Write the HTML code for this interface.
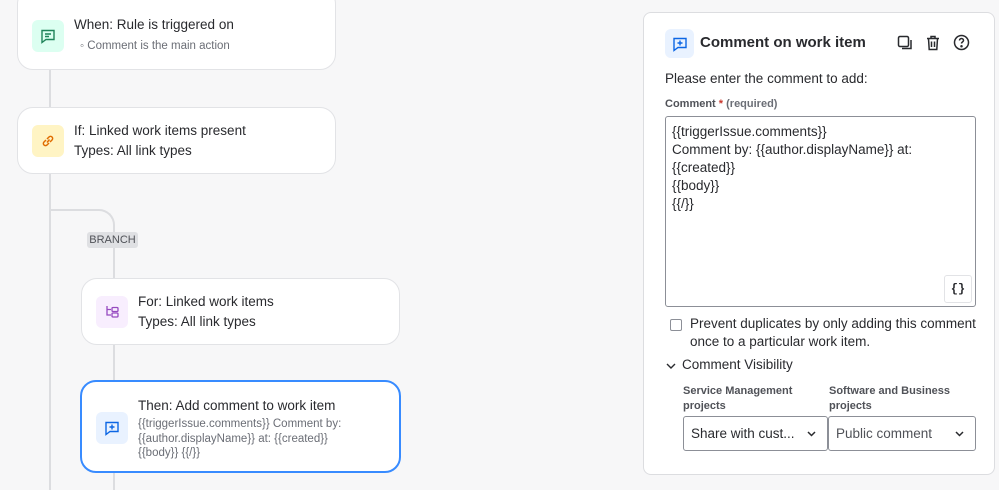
<!DOCTYPE html>
<html><head><style>
*{box-sizing:border-box;margin:0;padding:0}
body{width:999px;height:488px;overflow:hidden;background:#f7f7f8;font-family:"Liberation Sans",sans-serif;color:#292a2e;position:relative}
.card{position:absolute;background:#fff;border:1px solid #e2e3e6;border-radius:16px}
.ic{position:absolute;width:32px;height:32px;border-radius:6px;display:flex;align-items:center;justify-content:center}
.t{position:absolute;font-size:13.5px;line-height:20px}
.line{position:absolute;background:#dcdde0;width:2px}
.panel{position:absolute;left:643px;top:12px;width:352px;height:463px;background:#fff;border:1px solid #dcdde0;border-radius:8px}
.lbl{font-size:11px;font-weight:bold;color:#505258}
</style></head><body>
<div class="line" style="left:49px;top:60px;height:430px"></div>
<div style="position:absolute;left:49px;top:209px;width:66px;height:40px;border-top:2px solid #dcdde0;border-right:2px solid #dcdde0;border-top-right-radius:16px"></div>
<div class="line" style="left:113px;top:240px;height:250px"></div>
<div style="position:absolute;left:87px;top:232px;width:51px;height:16px;background:#dfe0e3;border-radius:3px;font-size:11px;color:#505258;text-align:center;line-height:16px">BRANCH</div>

<div class="card" style="left:17px;top:-12px;width:319px;height:82px">
<div class="ic" style="left:14px;top:31px;background:#dcfff1"><svg width="16" height="16" viewBox="0 0 16 16" fill="none" stroke="#1f845a" stroke-width="1.4"><path d="M2 2.5h12v9H6l-4 3z"/><path d="M5 6h6M5 8.5h4"/></svg></div>
<div class="t" style="left:56px;top:26px">When: Rule is triggered on</div>
<div class="t" style="left:62px;top:47px;font-size:11.5px;color:#6b6e76">◦ Comment is the main action</div>
</div>

<div class="card" style="left:17px;top:107px;width:319px;height:67px">
<div class="ic" style="left:14px;top:17px;background:#fff4c4"><svg width="16" height="16" viewBox="0 0 16 16" fill="none" stroke="#e06c00" stroke-width="1.5"><path d="M7 9.5l2.5-3M6 7L4 9a2 2 0 003 3l2-2M10 9l2-2a2 2 0 00-3-3L7 6"/></svg></div>
<div class="t" style="left:56px;top:13px">If: Linked work items present</div>
<div class="t" style="left:56px;top:33px">Types: All link types</div>
</div>

<div class="card" style="left:81px;top:278px;width:319px;height:67px">
<div class="ic" style="left:14px;top:17px;background:#f8eefe"><svg width="16" height="16" viewBox="0 0 16 16" fill="none" stroke="#964ac0" stroke-width="1.3"><path d="M3 2v9h4M3 5.5h4"/><rect x="8" y="3.5" width="6" height="4" rx="1"/><rect x="8" y="9" width="6" height="4" rx="1"/></svg></div>
<div class="t" style="left:56px;top:13px">For: Linked work items</div>
<div class="t" style="left:56px;top:33px">Types: All link types</div>
</div>

<div class="card" style="left:80px;top:380px;width:321px;height:93px;border:2px solid #388bff">
<div class="ic" style="left:14px;top:30px;background:#e9f2ff"><svg width="16" height="16" viewBox="0 0 16 16" fill="none" stroke="#0c66e4" stroke-width="1.4"><path d="M2 2.5h12v9H6l-4 3z"/><path d="M8 4.5v5M5.5 7h5"/></svg></div>
<div class="t" style="left:56px;top:14px">Then: Add comment to work item</div>
<div class="t" style="left:56px;top:35px;font-size:11.5px;line-height:14.5px;color:#6b6e76;width:215px">{{triggerIssue.comments}} Comment by: {{author.displayName}} at: {{created}} {{body}} {{/}}</div>
</div>

<div class="panel">
<div class="ic" style="left:21px;top:16px;width:29px;height:29px;background:#e9f2ff"><svg width="16" height="16" viewBox="0 0 16 16" fill="none" stroke="#0c66e4" stroke-width="1.4"><path d="M2 2.5h12v9H6l-4 3z"/><path d="M8 4.5v5M5.5 7h5"/></svg></div>
<div style="position:absolute;left:56px;top:21px;font-size:15px;font-weight:bold">Comment on work item</div>
<svg style="position:absolute;left:253px;top:22px" width="16" height="16" viewBox="0 0 16 16" fill="none" stroke="#292a2e" stroke-width="1.5"><rect x="1.5" y="1.5" width="10" height="10" rx="1.5"/><path d="M14 5v8.5H5"/></svg>
<svg style="position:absolute;left:282px;top:22px" width="14" height="16" viewBox="0 0 14 16" fill="none" stroke="#292a2e" stroke-width="1.5"><path d="M1 3.5h12M5 3.5V1.5h4v2M2.5 3.5l.7 11h7.6l.7-11M5.5 6.5v5.5M8.5 6.5v5.5"/></svg>
<svg style="position:absolute;left:309px;top:21px" width="17" height="17" viewBox="0 0 17 17" fill="none" stroke="#292a2e" stroke-width="1.5"><circle cx="8.5" cy="8.5" r="7"/><path d="M6.5 6.5a2 2 0 114 0c0 1.3-2 1.5-2 3"/><circle cx="8.5" cy="12.3" r=".5" fill="#292a2e"/></svg>
<div style="position:absolute;left:21px;top:58px;font-size:13.5px">Please enter the comment to add:</div>
<div class="lbl" style="position:absolute;left:21px;top:85px">Comment <span style="color:#c9372c">*</span> <span style="color:#6b6e76">(required)</span></div>
<div style="position:absolute;left:21px;top:103px;width:311px;height:191px;border:1px solid #8c8f97;border-radius:3px;padding:6px 6px;font-size:13.5px;line-height:18px">{{triggerIssue.comments}}<br>Comment by: {{author.displayName}} at:<br>{{created}}<br>{{body}}<br>{{/}}
<div style="position:absolute;right:3px;bottom:3px;width:28px;height:28px;border:1px solid #e2e3e6;border-radius:3px;font-family:'Liberation Mono',monospace;font-size:12px;font-weight:bold;text-align:center;line-height:26px">{}</div></div>
<div style="position:absolute;left:26px;top:306px;width:12px;height:12px;border:1.5px solid #8c8f97;border-radius:2px"></div>
<div style="position:absolute;left:46px;top:302px;font-size:13.5px;line-height:18px">Prevent duplicates by only adding this comment<br>once to a particular work item.</div>
<svg style="position:absolute;left:22px;top:349px" width="10" height="8" viewBox="0 0 10 8" fill="none" stroke="#292a2e" stroke-width="1.4"><path d="M1 2l4 4 4-4"/></svg>
<div style="position:absolute;left:38px;top:344px;font-size:13.5px">Comment Visibility</div>
<div class="lbl" style="position:absolute;left:39px;top:371px;line-height:15px">Service Management<br>projects</div>
<div class="lbl" style="position:absolute;left:185px;top:371px;line-height:15px">Software and Business<br>projects</div>
<div style="position:absolute;left:39px;top:403px;width:145px;height:35px;border:1px solid #8c8f97;border-radius:3px;font-size:13.5px;line-height:33px;padding-left:7px">Share with cust...<svg style="position:absolute;right:11px;top:14px" width="9" height="6" viewBox="0 0 9 6" fill="none" stroke="#292a2e" stroke-width="1.5"><path d="M1 1l3.5 3.5L8 1"/></svg></div>
<div style="position:absolute;left:184px;top:403px;width:148px;height:35px;border:1px solid #8c8f97;border-radius:3px;font-size:13.5px;line-height:33px;padding-left:7px;color:#505258">Public comment<svg style="position:absolute;right:11px;top:14px" width="9" height="6" viewBox="0 0 9 6" fill="none" stroke="#292a2e" stroke-width="1.5"><path d="M1 1l3.5 3.5L8 1"/></svg></div>
</div>
</body></html>
